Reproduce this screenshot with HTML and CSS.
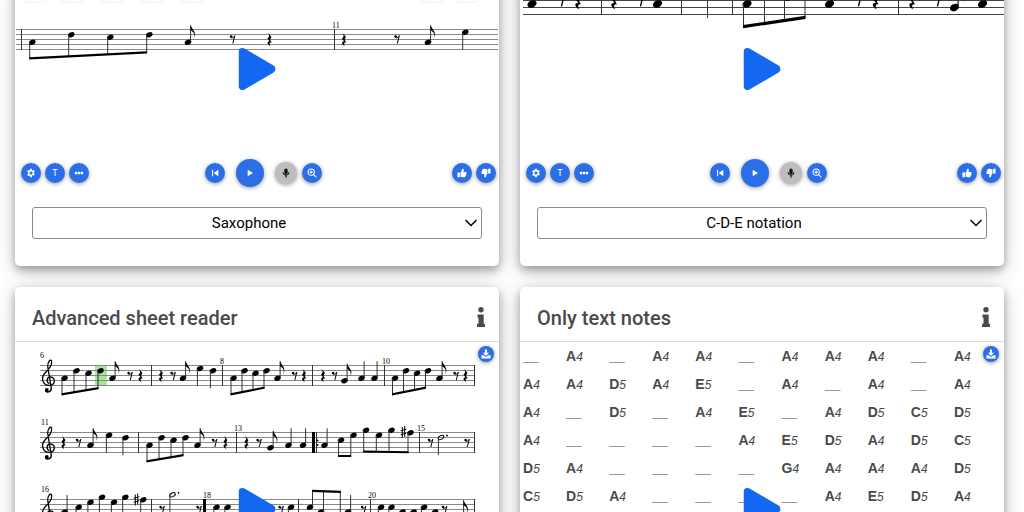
FILE: index.html
```html
<!DOCTYPE html>
<html lang="en">

<head>
    <meta charset="UTF-8">
    <meta name="viewport" content="width=device-width, initial-scale=1.0" />
    <title>Sheet readers</title>
    <link rel="stylesheet" href="styles.css">
</head>

<body>
    <!-- Shared music symbols and icons -->
    <svg class="symbols" aria-hidden="true">
        <defs>
            <ellipse id="head" rx="3.4" ry="2.5" transform="rotate(-25)" />
            <g id="down">
                <use href="#head" />
                <path d="M-2.6 .5V17.5" class="stem" />
            </g>
            <g id="up">
                <use href="#head" />
                <path d="M2.6 -.5V-17" class="stem" />
            </g>
            <g id="eighth">
                <use href="#up" />
                <path d="M2.6 -17.5C3.2 -13 9.5 -10.5 5.8 -4C7.5 -9 4.5 -11 2.6 -12Z" />
            </g>
            <g id="half">
                <ellipse rx="3" ry="1.8" transform="rotate(-28)" class="open" />
                <path d="M-2.6 .5V17.5" class="stem" />
                <circle cx="6" cy="-2" r=".9" />
            </g>
            <path id="rest4" d="M-1.5 -6.8L2 -2.6C.3 -.6 .4 .6 2.3 3.2C.2 2.3 -.6 4 .8 6.8C-3.2 4.3 -2.3 1.5 .3 2.2L-2 -1C0 -2.8 0 -4.3 -1.5 -6.8Z" />
            <g id="rest8">
                <circle cx="-1.4" cy="-2.5" r="1.3" />
                <path d="M-1.5 -1.3C.5 -.9 1.5 -2 2.3 -3.3L.3 4.5" class="line" />
            </g>
            <path id="sharp" d="M-1.2 -5V6M1.2 -6V5M-2.8 -1.2L2.8 -2.8M-2.8 2.8L2.8 1.2" class="line" />
            <g id="clef">
                <path d="M49.5 383.5C46 382.5 46.5 377 50.5 377C56 377 55.5 385.3 49.5 385.3C42 385.3 40.8 377.5 45 373C49 369 52.5 365.5 51.5 361C50.5 358.3 47.5 362 47.7 366.5L51.3 388C51.5 392.5 46 393 45.5 390.5" class="curl" />
                <circle cx="46.8" cy="390" r="1.9" />
            </g>
            <path id="staff" d="M40 .5H474.5M40 5.5H474.5M40 10.5H474.5M40 15.5H474.5M40 20.5H474.5" class="staff" />
            <!-- four beamed eighths, first head at 0,0 -->
            <g id="run">
                <use href="#head" />
                <use href="#head" x="12" y="-7.5" />
                <use href="#head" x="24" y="-5" />
                <use href="#head" x="36" y="-7.5" />
                <path d="M-2.5 0V16M9.5 -7V14M21.5 -5V12M33.5 -7V10" class="stem" />
                <path d="M-3 15V17.2L34 11V8.8Z" />
            </g>
            <g id="run-tight">
                <use href="#head" />
                <use href="#head" x="11" y="-7.5" />
                <use href="#head" x="22" y="-5" />
                <use href="#head" x="33" y="-7.5" />
                <path d="M-2.5 0V16M8.5 -7V14M19.5 -5V12M30.5 -7V10" class="stem" />
                <path d="M-3 15V17.2L31 10.5V8.3Z" />
            </g>
        </defs>
        <symbol id="i-gear" viewBox="0 0 24 24"><path fill-rule="evenodd" d="M10 2h4l.5 2.8 1.9 1.1 2.7-1 2 3.5-2.2 1.8v2.6l2.2 1.8-2 3.5-2.7-1-1.9 1.1L14 22h-4l-.5-2.8-1.9-1.1-2.7 1-2-3.5 2.2-1.8v-2.6L2.9 8.4l2-3.5 2.7 1 1.9-1.1zM12 8.2a3.8 3.8 0 1 0 0 7.6 3.8 3.8 0 0 0 0-7.6z" /></symbol>
        <symbol id="i-dots" viewBox="0 0 24 24"><rect x="2" y="9" width="6" height="6" rx="2" /><rect x="9" y="9" width="6" height="6" rx="2" /><rect x="16" y="9" width="6" height="6" rx="2" /></symbol>
        <symbol id="i-start" viewBox="0 0 24 24"><path d="M5 4h2.500v16H5zM20 4v16L9 12z" /></symbol>
        <symbol id="i-play" viewBox="0 0 24 24"><path d="M5 2l16 10L5 22z" /></symbol>
        <symbol id="i-mic" viewBox="0 0 24 24"><rect x="8" y="1" width="8" height="14" rx="4" /><path d="M4 10h2.2a5.8 5.8 0 0 0 11.6 0H20a8 8 0 0 1-6.500 7.8V23h-3v-5.2A8 8 0 0 1 4 10z" /></symbol>
        <symbol id="i-zoom" viewBox="0 0 24 24"><g fill="none" stroke="currentColor" stroke-width="2.6"><circle cx="10" cy="10" r="7.5" /><path d="M15.5 15.5L22.5 22.5M10 6v8M6 10h8" /></g></symbol>
        <symbol id="i-thumb" viewBox="0 0 24 24"><path d="M1 11h6v11H1zM8.500 11C11 8.500 11.500 6 12 3c.3-2 4.500-2 4.500 2 0 2-.8 3-1 4.500H21c2.500 0 2.800 3 1.200 4 .8 1.500 .3 3-.8 3.500 .3 1.500-.2 2.500-1.200 3 0 1.500-1 2.500-3 2.500-4 0-6-.5-8.700-2z" /></symbol>
        <symbol id="i-save" viewBox="0 0 24 24"><path d="M9.5 1h5v8h5L12 16.5 4.5 9h5z" /><path d="M1 15h5.5l4 3.500h3l4-3.500H23v8H1z" /></symbol>
        <symbol id="i-info" viewBox="0 0 10 20"><circle cx="5" cy="2.7" r="2.7" /><path d="M1.500 7.5H7.7V16.8H9V20H1V16.8H2.500V10.700H1.500Z" /></symbol>
        <symbol id="i-bigplay" viewBox="0 0 37 42"><path d="M4 4L33 21 4 38Z" stroke="currentColor" stroke-width="8" stroke-linejoin="round" /></symbol>
    </svg>

    <main class="cards">
        <section class="card">
            <div class="viewer">
                <svg class="score" viewBox="15 -20 484 178" role="img" aria-label="Saxophone score">
                    <g class="toggles">
                        <rect x="23" y="-9" width="23" height="11" rx="4" /><circle cx="26" cy="0" r="2.5" />
                        <rect x="62" y="-9" width="23" height="11" rx="4" /><circle cx="65" cy="0" r="2.5" />
                        <rect x="101" y="-9" width="23" height="11" rx="4" /><circle cx="104" cy="0" r="2.5" />
                        <rect x="140" y="-9" width="23" height="11" rx="4" /><circle cx="143" cy="0" r="2.5" />
                        <rect x="181" y="-9" width="23" height="11" rx="4" /><circle cx="184" cy="0" r="2.5" />
                        <rect x="421" y="-9" width="23" height="11" rx="4" /><circle cx="424" cy="0" r="2.5" />
                        <rect x="457" y="-9" width="23" height="11" rx="4" /><circle cx="460" cy="0" r="2.5" />
                    </g>
                    <path class="staff" d="M16 29.5H498M16 34.5H498M16 39.5H498M16 44.5H498M16 49.5H498" />
                    <path class="bar" d="M21.5 29V50M334.5 29V50" />
                    <use href="#head" x="32.3" y="42.3" />
                    <use href="#head" x="71.3" y="34.8" />
                    <use href="#head" x="110.3" y="37.3" />
                    <use href="#head" x="149.3" y="34.8" />
                    <path class="stem" d="M29.7 42V58M68.7 35V56M107.7 37V55M146.7 35V53" />
                    <path d="M29.2 57.3V59.5L147 53.5V51.3Z" />
                    <use href="#eighth" x="188" y="42.3" />
                    <use href="#rest8" x="232.5" y="39" />
                    <use href="#rest4" x="269.5" y="39.5" />
                    <text x="332" y="28">11</text>
                    <use href="#rest4" x="344" y="39.5" />
                    <use href="#rest8" x="397" y="39" />
                    <use href="#eighth" x="428" y="42.3" />
                    <use href="#down" x="465.3" y="32.3" />
                </svg>
                <button class="big-play" aria-label="Play video"><svg><use href="#i-bigplay" /></svg></button>
            </div>
            <div class="controls">
                <div class="group">
                    <button class="round" aria-label="Settings"><svg><use href="#i-gear" /></svg></button>
                    <button class="round">T</button>
                    <button class="round" aria-label="More"><svg><use href="#i-dots" /></svg></button>
                </div>
                <div class="group player">
                    <button class="round" aria-label="To start"><svg><use href="#i-start" /></svg></button>
                    <button class="round play" aria-label="Play"><svg><use href="#i-play" /></svg></button>
                    <button class="round mic" aria-label="Microphone"><svg><use href="#i-mic" /></svg></button>
                    <button class="round" aria-label="Zoom in"><svg><use href="#i-zoom" /></svg></button>
                </div>
                <div class="group">
                    <button class="round" aria-label="Like"><svg><use href="#i-thumb" /></svg></button>
                    <button class="round dislike" aria-label="Dislike"><svg><use href="#i-thumb" /></svg></button>
                </div>
            </div>
            <div class="picker">
                <select aria-label="Instrument">
                    <option>Saxophone</option>
                </select>
                <svg viewBox="0 0 12 8"><path d="M.5 1L6 6.5 11.5 1" /></svg>
            </div>
        </section>

        <section class="card">
            <div class="viewer">
                <svg class="score large" viewBox="520 -20 484 178" role="img" aria-label="C-D-E notation score">
                    <path class="staff" d="M523 .5H1004M523 7.5H1004M523 14.5H1004" />
                    <path class="bar" d="M601.5 0V15M681.5 0V15M707.5 0V18M732.5 0V15M898.5 0V15" />
                    <g transform="translate(532 4) scale(1.4)"><use href="#head" /></g>
                    <g transform="translate(561 0) scale(1.4)"><use href="#rest8" /></g>
                    <g transform="translate(578 0) scale(1.4)"><use href="#rest4" /></g>
                    <g transform="translate(614 0) scale(1.4)"><use href="#rest4" /></g>
                    <g transform="translate(640 0) scale(1.4)"><use href="#rest8" /></g>
                    <g transform="translate(657.5 4) scale(1.4)"><use href="#head" /></g>
                    <g transform="translate(747 4) scale(1.4)"><use href="#head" /></g>
                    <g transform="translate(788 -3) scale(1.4)"><use href="#head" /></g>
                    <path class="stem" d="M743.5 4V27M764.5 0V24M784.5 0V21M805 0V18" />
                    <path d="M743 25V28.2L805.5 19V15.8Z" />
                    <g transform="translate(829.5 4) scale(1.4)"><use href="#head" /></g>
                    <g transform="translate(858 0) scale(1.4)"><use href="#rest8" /></g>
                    <g transform="translate(875.5 0) scale(1.4)"><use href="#rest4" /></g>
                    <g transform="translate(912 0) scale(1.4)"><use href="#rest4" /></g>
                    <g transform="translate(937 0) scale(1.4)"><use href="#rest8" /></g>
                    <g transform="translate(954.5 7.5) scale(1.4)"><use href="#eighth" /></g>
                    <g transform="translate(982.5 4) scale(1.4)"><use href="#head" /></g>
                </svg>
                <button class="big-play" aria-label="Play video"><svg><use href="#i-bigplay" /></svg></button>
            </div>
            <div class="controls">
                <div class="group">
                    <button class="round" aria-label="Settings"><svg><use href="#i-gear" /></svg></button>
                    <button class="round">T</button>
                    <button class="round" aria-label="More"><svg><use href="#i-dots" /></svg></button>
                </div>
                <div class="group player">
                    <button class="round" aria-label="To start"><svg><use href="#i-start" /></svg></button>
                    <button class="round play" aria-label="Play"><svg><use href="#i-play" /></svg></button>
                    <button class="round mic" aria-label="Microphone"><svg><use href="#i-mic" /></svg></button>
                    <button class="round" aria-label="Zoom in"><svg><use href="#i-zoom" /></svg></button>
                </div>
                <div class="group">
                    <button class="round" aria-label="Like"><svg><use href="#i-thumb" /></svg></button>
                    <button class="round dislike" aria-label="Dislike"><svg><use href="#i-thumb" /></svg></button>
                </div>
            </div>
            <div class="picker">
                <select aria-label="Notation">
                    <option>C-D-E notation</option>
                </select>
                <svg viewBox="0 0 12 8"><path d="M.5 1L6 6.5 11.5 1" /></svg>
            </div>
        </section>

        <section class="card">
            <header class="card-header">
                <h2>Advanced sheet reader</h2>
                <button class="info" aria-label="Info"><svg><use href="#i-info" /></svg></button>
            </header>
            <div class="viewer">
                <svg class="score" viewBox="15 342 484 334" role="img" aria-label="Full score">
                    <!-- first line -->
                    <rect x="95" y="366" width="12" height="20" class="cursor" />
                    <use href="#staff" y="365" />
                    <path class="bar" d="M151.5 365V386M222.5 365V386M312.5 365V386M384.5 365V386M474.5 365V386" />
                    <use href="#clef" />
                    <text x="40" y="358">6</text>
                    <text x="220" y="364">8</text>
                    <text x="382" y="364">10</text>
                    <use href="#run" x="64.5" y="378.3" />
                    <use href="#eighth" x="112.5" y="378.3" />
                    <use href="#rest8" x="130" y="375.5" />
                    <use href="#rest4" x="140.5" y="375.5" />
                    <use href="#rest4" x="161" y="375.5" />
                    <use href="#rest8" x="173" y="375.5" />
                    <use href="#eighth" x="183" y="378.3" />
                    <use href="#down" x="200" y="368.5" />
                    <use href="#down" x="213" y="370.8" />
                    <use href="#run-tight" x="233.5" y="378.3" />
                    <use href="#eighth" x="277.5" y="378.3" />
                    <use href="#rest8" x="294.5" y="375.5" />
                    <use href="#rest4" x="304" y="375.5" />
                    <use href="#rest4" x="323" y="375.5" />
                    <use href="#rest8" x="334.5" y="375.5" />
                    <use href="#eighth" x="344.5" y="380.7" />
                    <use href="#up" x="361.5" y="378.3" />
                    <use href="#up" x="374.5" y="378.3" />
                    <use href="#run-tight" x="395" y="378.3" />
                    <use href="#eighth" x="439.5" y="378.3" />
                    <use href="#rest8" x="456" y="375.5" />
                    <use href="#rest4" x="465.5" y="375.5" />

                    <!-- second line -->
                    <use href="#staff" y="432" />
                    <path class="bar" d="M138.5 432V453M236.5 432V453M316.5 432V453M419.5 432V453M474.5 432V453" />
                    <rect x="312" y="432" width="3" height="21" />
                    <use href="#clef" y="67" />
                    <text x="41" y="425">11</text>
                    <text x="234" y="431">13</text>
                    <text x="417" y="431">15</text>
                    <use href="#rest4" x="63.5" y="442.5" />
                    <use href="#rest8" x="78.5" y="442.5" />
                    <use href="#eighth" x="90.5" y="445.3" />
                    <use href="#down" x="109" y="435.3" />
                    <use href="#down" x="125.5" y="437.8" />
                    <use href="#run" x="149.5" y="445.3" />
                    <use href="#eighth" x="197.5" y="445.3" />
                    <use href="#rest8" x="214.5" y="442.5" />
                    <use href="#rest4" x="225.5" y="442.5" />
                    <use href="#rest4" x="246.5" y="442.5" />
                    <use href="#rest8" x="259" y="442.5" />
                    <use href="#eighth" x="270.5" y="447.8" />
                    <use href="#up" x="288.5" y="445.3" />
                    <use href="#up" x="303" y="445.3" />
                    <circle cx="317.5" cy="440.5" r="1" />
                    <circle cx="317.5" cy="445" r="1" />
                    <use href="#up" x="324.5" y="445.3" />
                    <use href="#head" x="341" y="440.3" />
                    <use href="#head" x="353.5" y="435.3" />
                    <path class="stem" d="M338.5 440V457M350.8 435V457" />
                    <rect x="338" y="455" width="13" height="2" />
                    <use href="#head" x="366" y="430.3" />
                    <use href="#head" x="379" y="435.3" />
                    <use href="#head" x="391.5" y="430.3" />
                    <use href="#head" x="410.5" y="432.8" />
                    <path class="stem" d="M363.7 430V452M376.3 435V452M389 430V452M408 433V453" />
                    <path d="M363.2 450.5V452.5L408.5 453.3V451.3Z" />
                    <use href="#sharp" x="403.5" y="432" />
                    <use href="#rest8" x="430.5" y="442.5" />
                    <use href="#half" x="441" y="437.5" />
                    <use href="#rest8" x="467" y="442.5" />

                    <!-- third line -->
                    <use href="#staff" y="499" />
                    <path class="bar" d="M151.5 499V520M298.5 499V520M370.5 499V520M474.5 499V520" />
                    <rect x="203" y="499" width="3" height="21" />
                    <use href="#clef" y="134" />
                    <text x="41" y="492">16</text>
                    <text x="203" y="498">18</text>
                    <text x="368" y="498">20</text>
                    <use href="#up" x="64.5" y="512" />
                    <use href="#down" x="78.7" y="507.3" />
                    <use href="#down" x="90.5" y="502.3" />
                    <use href="#down" x="102" y="497.3" />
                    <use href="#down" x="114" y="502.3" />
                    <use href="#down" x="125.3" y="497.3" />
                    <use href="#sharp" x="136.5" y="499.5" />
                    <use href="#down" x="143.3" y="499.8" />
                    <use href="#rest8" x="162" y="509.5" />
                    <use href="#half" x="172.5" y="494.8" />
                    <use href="#rest8" x="199" y="509.5" />
                    <use href="#down" x="216.5" y="507.3" />
                    <use href="#down" x="227.5" y="507.3" />
                    <use href="#rest8" x="281" y="509.5" />
                    <use href="#down" x="291" y="507.3" />
                    <use href="#head" x="310" y="507.3" />
                    <use href="#head" x="321" y="512" />
                    <path class="stem" d="M312.5 491V507M323.5 491V512M340.3 491V515" />
                    <path d="M312 489.8V492L340.8 493V490.8Z" />
                    <use href="#up" x="348" y="512" />
                    <use href="#rest8" x="363.5" y="509.5" />
                    <use href="#down" x="381" y="507.3" />
                    <use href="#down" x="391.5" y="507.3" />
                    <use href="#down" x="402.5" y="512" />
                    <use href="#down" x="413.5" y="512" />
                    <use href="#down" x="424" y="507.3" />
                    <use href="#down" x="435" y="512" />
                    <use href="#rest8" x="444.5" y="509.5" />
                    <use href="#eighth" x="461" y="517.3" />
                </svg>
                <button class="round save" aria-label="Download"><svg><use href="#i-save" /></svg></button>
                <button class="big-play" aria-label="Play video"><svg><use href="#i-bigplay" /></svg></button>
            </div>
        </section>

        <section class="card">
            <header class="card-header">
                <h2>Only text notes</h2>
                <button class="info" aria-label="Info"><svg><use href="#i-info" /></svg></button>
            </header>
            <div class="viewer">
                <div class="notes">
                    <b>__</b><b>A<i>4</i></b><b>__</b><b>A<i>4</i></b><b>A<i>4</i></b><b>__</b><b>A<i>4</i></b><b>A<i>4</i></b><b>A<i>4</i></b><b>__</b><b>A<i>4</i></b>
                    <b>A<i>4</i></b><b>A<i>4</i></b><b>D<i>5</i></b><b>A<i>4</i></b><b>E<i>5</i></b><b>__</b><b>A<i>4</i></b><b>__</b><b>A<i>4</i></b><b>__</b><b>A<i>4</i></b>
                    <b>A<i>4</i></b><b>__</b><b>D<i>5</i></b><b>__</b><b>A<i>4</i></b><b>E<i>5</i></b><b>__</b><b>A<i>4</i></b><b>D<i>5</i></b><b>C<i>5</i></b><b>D<i>5</i></b>
                    <b>A<i>4</i></b><b>__</b><b>__</b><b>__</b><b>__</b><b>A<i>4</i></b><b>E<i>5</i></b><b>D<i>5</i></b><b>A<i>4</i></b><b>D<i>5</i></b><b>C<i>5</i></b>
                    <b>D<i>5</i></b><b>A<i>4</i></b><b>__</b><b>__</b><b>__</b><b>__</b><b>G<i>4</i></b><b>A<i>4</i></b><b>A<i>4</i></b><b>A<i>4</i></b><b>D<i>5</i></b>
                    <b>C<i>5</i></b><b>D<i>5</i></b><b>A<i>4</i></b><b>__</b><b>__</b><b>__</b><b>__</b><b>A<i>4</i></b><b>E<i>5</i></b><b>D<i>5</i></b><b>A<i>4</i></b>
                </div>
                <button class="round save" aria-label="Download"><svg><use href="#i-save" /></svg></button>
                <button class="big-play" aria-label="Play video"><svg><use href="#i-bigplay" /></svg></button>
            </div>
        </section>
    </main>
</body>

</html>
```
FILE: styles.css
```css
* {
    box-sizing: border-box;
}

body {
    margin: 0;
    height: 100vh;
    overflow: hidden;
    background: #fff;
    color: #4a4a4a;
    font-family: Roboto, sans-serif;
}

button {
    padding: 0;
    border: 0;
    background: none;
    font-family: inherit;
    cursor: pointer;
}

svg {
    display: block;
    fill: currentColor;
}

.symbols {
    position: absolute;
    width: 0;
    height: 0;
}

.cards {
    display: grid;
    grid-template-columns: 1fr 1fr;
    gap: 21px;
    margin-top: -20px;
    padding: 0 20px 20px 15px;
}

.card {
    display: flex;
    flex-direction: column;
    background: #fff;
    border-radius: 5px;
    box-shadow: 0 4px 8px rgba(0, 0, 0, 0.3), 0 4px 20px rgba(0, 0, 0, 0.2);
}

.card-header {
    display: flex;
    align-items: center;
    justify-content: space-between;
    height: 55px;
    padding: 8px 13px 0 17px;
    border-bottom: 1px solid #ddd;
}

.card-header h2 {
    margin: 0;
    font-size: 20px;
    font-weight: 500;
    line-height: 24px;
}

.info {
    padding-bottom: 2px;
    color: #4a4a4a;
}

.info svg {
    width: 10px;
    height: 20px;
}

.viewer {
    position: relative;
    flex: 1;
}

.big-play {
    position: absolute;
    top: 50%;
    left: 50%;
    transform: translate(-50%, -50%);
    color: #1467f0;
}

.big-play svg {
    width: 37px;
    height: 42px;
}

/* Sheet music */
.score {
    width: 100%;
    height: auto;
    color: #000;
    font-family: "Liberation Serif", serif;
    font-size: 8px;
}

.staff {
    stroke: #888;
    stroke-width: 1;
}

.large .staff {
    stroke: #444;
}

.bar,
.stem {
    stroke: #333;
    stroke-width: 1;
}

.line,
.curl,
.open {
    fill: none;
    stroke: #000;
    stroke-width: 1;
}

.curl {
    stroke-width: 1.3;
}

.cursor {
    fill: #a5e69a;
}

.toggles {
    fill: #fff;
    stroke: #eceef2;
}

/* Player controls */
.controls {
    display: grid;
    grid-template-columns: 184px 1fr auto;
    align-items: center;
    padding: 0 3px 0 6px;
    margin-top: 1px;
}

.group {
    display: flex;
    align-items: center;
    gap: 4px;
}

.player {
    gap: 0;
}

.round {
    display: flex;
    align-items: center;
    justify-content: center;
    width: 20px;
    height: 20px;
    border-radius: 50%;
    background: #2a6fe8;
    color: #fff;
    font-size: 9px;
    box-shadow: 0 1px 4px rgba(0, 0, 0, 0.4);
}

.round svg {
    width: 10px;
    height: 10px;
}

.play {
    width: 28px;
    height: 28px;
    margin: 0 11px;
}

.play svg {
    width: 8px;
    height: 8px;
}

.mic {
    width: 22px;
    height: 22px;
    margin-right: 5px;
    background: #bdbdbd;
    color: #111;
}

.dislike svg {
    transform: rotate(180deg);
}

.save {
    position: absolute;
    top: 4px;
    right: 5px;
    width: 16px;
    height: 16px;
}

/* Drop-down under the player */
.picker {
    position: relative;
    margin: 20px 17px 27px;
}

.picker select {
    display: block;
    width: 100%;
    height: 32px;
    padding: 0 16px 0 0;
    appearance: none;
    border: 1px solid #8a8a8a;
    border-radius: 3px;
    background: #fff;
    color: #000;
    font-family: inherit;
    font-size: 15px;
    text-align: center;
    text-align-last: center;
}

.picker svg {
    position: absolute;
    top: 12px;
    right: 5px;
    width: 12px;
    height: 8px;
    fill: none;
    stroke: #000;
    stroke-width: 1.5;
    pointer-events: none;
}

/* Text notes */
.notes {
    display: grid;
    grid-template-columns: repeat(11, 1fr);
    grid-auto-rows: 28px;
    padding: 0 7px 0 3px;
    font-family: "Liberation Sans", sans-serif;
    font-size: 14px;
    line-height: 28px;
}

.notes i {
    font-size: 12px;
    font-weight: 400;
}
```
